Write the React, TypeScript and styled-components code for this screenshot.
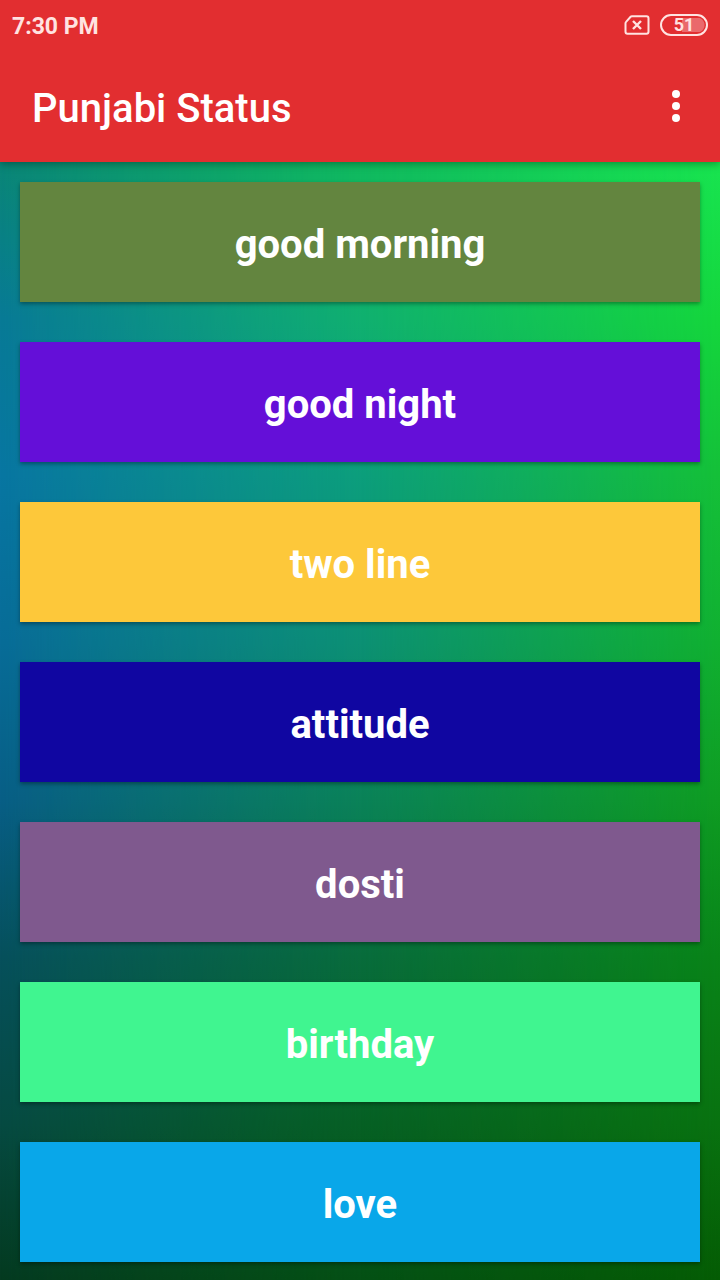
import React from "react";
import styled, { createGlobalStyle } from "styled-components";

const GlobalStyle = createGlobalStyle`
  *, *::before, *::after { box-sizing: border-box; }
  body { margin: 0; background: #04421a; font-family: Roboto, sans-serif; }
`;

const Screen = styled.div`
  display: flex;
  flex-direction: column;
  min-height: 100vh;
`;

const Header = styled.header`
  position: relative;
  z-index: 1;
  background: #e22e30;
  color: #fff;
  box-shadow: 0 2px 8px rgba(0, 0, 0, 0.35);
`;

const StatusBar = styled.div`
  display: flex;
  align-items: center;
  justify-content: space-between;
  height: 50px;
  padding: 0 12px;
  color: #ffe3e1;
`;

const Clock = styled.time`
  font-size: 23px;
  line-height: 28px;
  font-weight: 700;
  padding-top: 4px;
`;

const StatusIcons = styled.div`
  display: flex;
  align-items: center;
  gap: 10px;
`;

const Battery = styled.div`
  display: flex;
  align-items: center;
  justify-content: center;
  width: 48px;
  height: 22px;
  border: 2px solid currentColor;
  border-radius: 11px;
  background: radial-gradient(circle at 0 50%, #ea696c 7px, transparent 8px) 35px center / 8px 14px no-repeat,
    linear-gradient(#ea696c, #ea696c) 20px center / 15px 14px no-repeat;
  font-size: 18px;
  line-height: 18px;
  font-weight: 700;
`;

const AppBar = styled.div`
  display: flex;
  align-items: center;
  justify-content: space-between;
  height: 112px;
  padding: 0 20px 0 32px;
`;

const Title = styled.h1`
  margin: 0;
  padding-top: 6px;
  font-size: 40px;
  line-height: 48px;
  font-weight: 500;
`;

const MenuButton = styled.button`
  display: flex;
  align-items: center;
  justify-content: center;
  width: 48px;
  height: 48px;
  padding: 0;
  border: 0;
  background: none;
  color: inherit;
`;

const Content = styled.main`
  position: relative;
  z-index: 0;
  flex: 1;
  padding: 20px 20px 18px;
  background: linear-gradient(#0a8676, #087a96 14%, #0876a2 28%, #086c98 43%, #085e86 57%, #06505c 71%, #064a42 86%, #043a20);

  &::before,
  &::after {
    content: "";
    position: absolute;
    inset: 0;
    z-index: -1;
  }

  &::before {
    background: linear-gradient(#10ba5e, #10b070 14%, #0c9e7c 28%, #0c9074 43%, #0a8258 57%, #086c3c 71%, #066024 86%, #045014);
    mask-image: linear-gradient(to right, transparent, #000 50%);
  }

  &::after {
    background: linear-gradient(#18e450, #14d63c 14%, #14c038 28%, #10b030 43%, #0e9c22 57%, #088418 71%, #087210 86%, #045c04);
    mask-image: linear-gradient(to right, transparent 50%, #000);
  }
`;

const CategoryList = styled.ul`
  display: flex;
  flex-direction: column;
  gap: 40px;
  margin: 0;
  padding: 0;
  list-style: none;
`;

const CategoryButton = styled.button<{ $color: string }>`
  display: block;
  width: 100%;
  height: 120px;
  padding: 6px 0 0;
  border: 0;
  background: ${({ $color }) => $color};
  color: #fff;
  font-family: inherit;
  font-size: 40px;
  line-height: 48px;
  font-weight: 700;
  box-shadow: 0 2px 4px rgba(0, 0, 0, 0.35);
`;

const categories = [
  { name: "good morning", color: "#63853f" },
  { name: "good night", color: "#640fd8" },
  { name: "two line", color: "#fdc83a" },
  { name: "attitude", color: "#1006a1" },
  { name: "dosti", color: "#7f598e" },
  { name: "birthday", color: "#40f590" },
  { name: "love", color: "#09a7e9" },
];

const NoSimIcon = () => (
  <svg width="26" height="20" viewBox="0 0 26 20" fill="none" stroke="currentColor" role="img" aria-label="No SIM card">
    <path d="M8 1.2h14.5a2 2 0 0 1 2 2v13.6a2 2 0 0 1-2 2h-19a2 2 0 0 1-2-2V8.3a2 2 0 0 1 .6-1.4l4.5-5.1A2 2 0 0 1 8 1.2Z" strokeWidth="2" />
    <path d="m9 6 8 8m0-8-8 8" strokeWidth="2.4" />
  </svg>
);

const MoreIcon = () => (
  <svg width="8" height="32" viewBox="0 0 8 32" fill="currentColor" aria-hidden="true">
    <circle cx="4" cy="4" r="4" />
    <circle cx="4" cy="16" r="4" />
    <circle cx="4" cy="28" r="4" />
  </svg>
);

export default function App() {
  return (
    <Screen>
      <GlobalStyle />
      <Header>
        <StatusBar>
          <Clock>7:30 PM</Clock>
          <StatusIcons>
            <NoSimIcon />
            <Battery>51</Battery>
          </StatusIcons>
        </StatusBar>
        <AppBar>
          <Title>Punjabi Status</Title>
          <MenuButton type="button" aria-label="More options">
            <MoreIcon />
          </MenuButton>
        </AppBar>
      </Header>
      <Content>
        <CategoryList>
          {categories.map(({ name, color }) => (
            <li key={name}>
              <CategoryButton type="button" $color={color}>{name}</CategoryButton>
            </li>
          ))}
        </CategoryList>
      </Content>
    </Screen>
  );
}
